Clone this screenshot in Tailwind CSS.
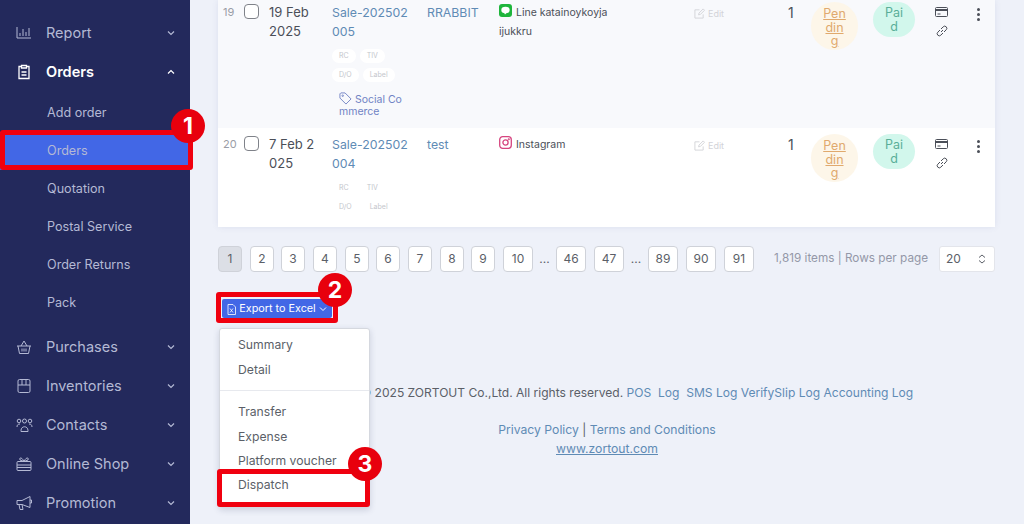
<!DOCTYPE html>
<html lang="en">
  <head>
    <meta charset="UTF-8" />
    <title>Orders</title>
    <script src="https://cdn.jsdelivr.net/npm/@tailwindcss/browser@4"></script>
  </head>
  <body class="bg-[#eef1f9] font-['Inter',sans-serif]">
    <div class="relative flex h-[524px] w-[1024px] overflow-hidden">

      <!-- Sidebar -->
      <aside class="w-[190px] shrink-0 bg-[#23295c] pt-[13px] text-[#b4b9d4]">
        <div class="flex h-[39px] items-center pl-[16px] pr-[15px] text-[14.5px]">
          <svg class="w-[16px] h-[16px]" viewBox="0 0 16 16" fill="none" stroke="currentColor" stroke-width="1"><path d="M1 2v11h14M4 11V8M7 11V4M10 11V7M13 11V3"/></svg>
          <span class="ml-[14px] flex-1">Report</span>
          <svg class="w-[8px] h-[8px]" viewBox="0 0 8 8" fill="none" stroke="currentColor" stroke-width="1.2"><path d="M1 2.5l3 3 3-3"/></svg>
        </div>
        <div class="flex h-[39px] items-center pl-[16px] pr-[15px] text-[14.5px] font-semibold text-white">
          <svg class="w-[16px] h-[16px]" viewBox="0 0 16 16" fill="none" stroke="currentColor" stroke-width="1.3"><path d="M5 2.5H3v12h10v-12h-2M5.5 1.5h5v2.500h-5zM5.500 8h5M5.500 11h5"/></svg>
          <span class="ml-[14px] flex-1">Orders</span>
          <svg class="w-[8px] h-[8px]" viewBox="0 0 8 8" fill="none" stroke="currentColor" stroke-width="1.2"><path d="M1 5.5l3-3 3 3"/></svg>
        </div>
        <div class="pt-[3px] text-[12.6px]">
          <div class="flex h-[38px] items-center pl-[47px]">Add order</div>
          <div class="flex h-[38px] items-center bg-[#4267e6] pl-[47px]">Orders</div>
          <div class="flex h-[38px] items-center pl-[47px]">Quotation</div>
          <div class="flex h-[38px] items-center pl-[47px]">Postal Service</div>
          <div class="flex h-[38px] items-center pl-[47px]">Order Returns</div>
          <div class="flex h-[38px] items-center pl-[47px]">Pack</div>
        </div>
        <div class="mt-[5px]">
          <div class="flex h-[39px] items-center pl-[16px] pr-[15px] text-[14.5px]">
            <svg class="w-[16px] h-[16px]" viewBox="0 0 16 16" fill="none" stroke="currentColor" stroke-width="1"><path d="M1 7h14M2 7l1.5 7.5h9L14 7M5 7l3-5 3 5M6 9.5v3M8 9.5v3M10 9.5v3"/></svg>
            <span class="ml-[14px] flex-1">Purchases</span>
            <svg class="w-[8px] h-[8px]" viewBox="0 0 8 8" fill="none" stroke="currentColor" stroke-width="1.2"><path d="M1 2.5l3 3 3-3"/></svg>
          </div>
          <div class="flex h-[39px] items-center pl-[16px] pr-[15px] text-[14.5px]">
            <svg class="w-[16px] h-[16px]" viewBox="0 0 16 16" fill="none" stroke="currentColor" stroke-width="1"><rect x="2" y="1.5" width="12" height="13" rx="1.5"/><path d="M2 7h12M6 7V1.5M10 7V1.5"/></svg>
            <span class="ml-[14px] flex-1">Inventories</span>
            <svg class="w-[8px] h-[8px]" viewBox="0 0 8 8" fill="none" stroke="currentColor" stroke-width="1.2"><path d="M1 2.5l3 3 3-3"/></svg>
          </div>
          <div class="flex h-[39px] items-center pl-[16px] pr-[15px] text-[14.5px]">
            <svg class="w-[17px] h-[16px]" viewBox="0 0 17 16" fill="none" stroke="currentColor" stroke-width="1"><circle cx="3" cy="4" r="1.8"/><circle cx="8.5" cy="4" r="2"/><circle cx="14" cy="4" r="1.8"/><path d="M1 10c0-2 1-3 3-3M16 10c0-2-1-3-3-3M5 13.5c0-5 7-5 7 0v1H5z"/></svg>
            <span class="ml-[13px] flex-1">Contacts</span>
            <svg class="w-[8px] h-[8px]" viewBox="0 0 8 8" fill="none" stroke="currentColor" stroke-width="1.2"><path d="M1 2.5l3 3 3-3"/></svg>
          </div>
          <div class="flex h-[39px] items-center pl-[16px] pr-[15px] text-[14.5px]">
            <svg class="w-[16px] h-[16px]" viewBox="0 0 16 16" fill="none" stroke="currentColor" stroke-width="1"><rect x="1" y="5.5" width="14" height="9" rx="1"/><path d="M1 9h14M1 11.5h14M8 5.5C6 1 3 1 4 4l4 1.5C10 1 13 1 12 4L8 5.5"/></svg>
            <span class="ml-[14px] flex-1">Online Shop</span>
            <svg class="w-[8px] h-[8px]" viewBox="0 0 8 8" fill="none" stroke="currentColor" stroke-width="1.2"><path d="M1 2.5l3 3 3-3"/></svg>
          </div>
          <div class="flex h-[39px] items-center pl-[16px] pr-[15px] text-[14.5px]">
            <svg class="w-[16px] h-[16px]" viewBox="0 0 16 16" fill="none" stroke="currentColor" stroke-width="1"><path d="M1 5.5h5L14 1.5v11L6 9.5H1zM3 9.5l1 5h3l-1-5M14 5h1.5v3H14"/></svg>
            <span class="ml-[14px] flex-1">Promotion</span>
            <svg class="w-[8px] h-[8px]" viewBox="0 0 8 8" fill="none" stroke="currentColor" stroke-width="1.2"><path d="M1 2.5l3 3 3-3"/></svg>
          </div>
        </div>
      </aside>

      <!-- Main -->
      <main class="flex-1 min-w-0">
        <div class="ml-[28px] mr-[29px] shadow-[0_0_6px_rgba(90,100,160,0.12)]">

          <!-- Row 19 -->
          <div class="grid h-[128px] grid-cols-[21px_25px_63px_95px_72px_195px_93px_24px_62px_62px_42px_18px] bg-[#f8f9fc] pl-[5px] pt-[3px] text-[13px] leading-[19px] text-[#4b4f58]">
            <div class="text-[11px] text-[#9a9da6]">19</div>
            <div class="pt-[1px]"><div class="h-[15px] w-[15px] rounded-[4px] border-[1.5px] border-[#7f8289] bg-white"></div></div>
            <div class="pr-[8px]">19 Feb 2025</div>
            <div class="text-[#5f8bb5]">
              <div class="break-all pr-[15px] text-[12.3px]">Sale-202502005</div>
              <div class="mt-[8px] flex gap-[4px] text-[7px] leading-[14px] text-[#c4c6cc]">
                <span class="rounded-full bg-white px-[7px]">RC</span><span class="rounded-full bg-white px-[7px]">TIV</span>
              </div>
              <div class="mt-[5px] flex gap-[4px] text-[7px] leading-[14px] text-[#c4c6cc]">
                <span class="rounded-full bg-white px-[7px]">D/O</span><span class="rounded-full bg-white px-[7px]">Label</span>
              </div>
              <div class="mt-[10px] w-[70px] pl-[7px] text-[10.5px] leading-[12px] break-all text-[#7083c4]">
                <svg class="inline-block h-[13px] w-[13px] align-[-2px]" viewBox="0 0 14 14" fill="none" stroke="currentColor" stroke-width="1"><path d="M1 2v4.5L7.5 13 13 7.5 6.5 1H2z"/><circle cx="4" cy="4" r="0.8"/></svg>
                Social Commerce
              </div>
            </div>
            <div class="text-[12.3px] text-[#5f8bb5]">RRABBIT</div>
            <div class="text-[10.5px] leading-[19px]">
              <svg class="mr-[1px] inline-block h-[13px] w-[13px] align-[-1px]" viewBox="0 0 13 13"><rect width="13" height="13" rx="3" fill="#1fb53c"/><ellipse cx="6.5" cy="6" rx="4.2" ry="3.3" fill="#fff"/><path d="M5 8.5l1 2 2-2z" fill="#fff"/></svg>
              Line katainoykoyja<br />ijukkru
            </div>
            <div class="flex items-center self-start pt-[1px] text-[9px] text-[#d2d3d8]">
              <svg class="mr-[3px] h-[11px] w-[11px]" viewBox="0 0 12 12" fill="none" stroke="currentColor" stroke-width="1"><path d="M10 7v4H1V2h5M5 7.5L5.5 5.5 10 1l1.5 1.5L7 7z"/></svg>Edit
            </div>
            <div class="pl-[1px] text-[14px]">1</div>
            <div class="-mt-[1px]"><div class="flex h-[48px] w-[47px] justify-center rounded-full bg-[#fdf6e9] pt-[5px] text-center text-[12.5px] leading-[13.5px] text-[#e0a96d]"><span class="w-[23px] break-all underline">Pending</span></div></div>
            <div class="-mt-[1px]"><div class="flex h-[35px] w-[42px] justify-center rounded-full bg-[#d2f7ec] pt-[4px] text-center text-[12.5px] leading-[13.5px] text-[#5aae98]"><span class="w-[21px] break-all">Paid</span></div></div>
            <div class="flex flex-col gap-[8px] pt-[4px] text-[#4b4f58]">
              <svg class="h-[10px] w-[13px]" viewBox="0 0 13 10"><rect x="0.5" y="0.5" width="12" height="9" rx="1" fill="none" stroke="currentColor"/><rect x="0.5" y="2" width="12" height="2" fill="currentColor"/><path d="M2.5 7h3" stroke="currentColor"/></svg>
              <svg class="ml-[1px] h-[12px] w-[12px]" viewBox="0 0 12 12" fill="none" stroke="currentColor" stroke-width="1"><path d="M5 7l2-2M4 5L1.8 7.2a2 2 0 003 3L7 8M8 7l2.2-2.2a2 2 0 00-3-3L5 4"/></svg>
            </div>
            <div class="pt-[5px]"><div class="flex w-[3px] flex-col gap-[2px]"><i class="h-[3px] w-[3px] rounded-full bg-[#4b4f58]"></i><i class="h-[3px] w-[3px] rounded-full bg-[#4b4f58]"></i><i class="h-[3px] w-[3px] rounded-full bg-[#4b4f58]"></i></div></div>
          </div>

          <!-- Row 20 -->
          <div class="grid h-[99px] grid-cols-[21px_25px_63px_95px_72px_195px_93px_24px_62px_62px_42px_18px] bg-white pl-[5px] pt-[7px] text-[13px] leading-[19px] text-[#4b4f58]">
            <div class="text-[11px] text-[#9a9da6]">20</div>
            <div class="pt-[1px]"><div class="h-[15px] w-[15px] rounded-[4px] border-[1.5px] border-[#7f8289] bg-white"></div></div>
            <div class="break-all pr-[15px]">7 Feb 2025</div>
            <div class="text-[#5f8bb5]">
              <div class="break-all pr-[15px] text-[12.3px]">Sale-202502004</div>
              <div class="mt-[8px] flex gap-[4px] text-[7px] leading-[14px] text-[#c4c6cc]">
                <span class="px-[7px]">RC</span><span class="px-[7px]">TIV</span>
              </div>
              <div class="mt-[5px] flex gap-[4px] text-[7px] leading-[14px] text-[#c4c6cc]">
                <span class="px-[7px]">D/O</span><span class="px-[7px]">Label</span>
              </div>
            </div>
            <div class="text-[12.3px] text-[#5f8bb5]">test</div>
            <div class="text-[10.5px] leading-[19px]">
              <svg class="mr-[1px] inline-block h-[13px] w-[13px] align-[-1px]" viewBox="0 0 13 13" fill="none" stroke="#d6457f" stroke-width="1.3"><rect x="0.7" y="0.7" width="11.6" height="11.6" rx="3"/><circle cx="6.5" cy="6.5" r="2.6"/><circle cx="9.8" cy="3.2" r="0.4"/></svg>
              Instagram
            </div>
            <div class="flex items-center self-start pt-[1px] text-[9px] text-[#d2d3d8]">
              <svg class="mr-[3px] h-[11px] w-[11px]" viewBox="0 0 12 12" fill="none" stroke="currentColor" stroke-width="1"><path d="M10 7v4H1V2h5M5 7.5L5.5 5.5 10 1l1.5 1.5L7 7z"/></svg>Edit
            </div>
            <div class="pl-[1px] text-[14px]">1</div>
            <div class="-mt-[1px]"><div class="flex h-[48px] w-[47px] justify-center rounded-full bg-[#fdf6e9] pt-[5px] text-center text-[12.5px] leading-[13.5px] text-[#e0a96d]"><span class="w-[23px] break-all underline">Pending</span></div></div>
            <div class="-mt-[1px]"><div class="flex h-[35px] w-[42px] justify-center rounded-full bg-[#d2f7ec] pt-[4px] text-center text-[12.5px] leading-[13.5px] text-[#5aae98]"><span class="w-[21px] break-all">Paid</span></div></div>
            <div class="flex flex-col gap-[8px] pt-[4px] text-[#4b4f58]">
              <svg class="h-[10px] w-[13px]" viewBox="0 0 13 10"><rect x="0.5" y="0.5" width="12" height="9" rx="1" fill="none" stroke="currentColor"/><rect x="0.5" y="2" width="12" height="2" fill="currentColor"/><path d="M2.5 7h3" stroke="currentColor"/></svg>
              <svg class="ml-[1px] h-[12px] w-[12px]" viewBox="0 0 12 12" fill="none" stroke="currentColor" stroke-width="1"><path d="M5 7l2-2M4 5L1.8 7.2a2 2 0 003 3L7 8M8 7l2.2-2.2a2 2 0 00-3-3L5 4"/></svg>
            </div>
            <div class="pt-[5px]"><div class="flex w-[3px] flex-col gap-[2px]"><i class="h-[3px] w-[3px] rounded-full bg-[#4b4f58]"></i><i class="h-[3px] w-[3px] rounded-full bg-[#4b4f58]"></i><i class="h-[3px] w-[3px] rounded-full bg-[#4b4f58]"></i></div></div>
          </div>
        </div>

        <!-- Pagination -->
        <div class="mt-[19px] flex h-[26px] items-center pl-[28px] pr-[29px] text-[12px] text-[#5b5f68]">
          <span class="flex h-[26px] w-[24px] items-center justify-center rounded-[4px] border border-[#cfd2d9] bg-[#dcdfe6]">1</span>
          <span class="ml-[8px] flex h-[26px] w-[24px] items-center justify-center rounded-[4px] border border-[#cfd2d9] bg-white">2</span>
          <span class="ml-[7px] flex h-[26px] w-[24px] items-center justify-center rounded-[4px] border border-[#cfd2d9] bg-white">3</span>
          <span class="ml-[8px] flex h-[26px] w-[24px] items-center justify-center rounded-[4px] border border-[#cfd2d9] bg-white">4</span>
          <span class="ml-[8px] flex h-[26px] w-[24px] items-center justify-center rounded-[4px] border border-[#cfd2d9] bg-white">5</span>
          <span class="ml-[7px] flex h-[26px] w-[24px] items-center justify-center rounded-[4px] border border-[#cfd2d9] bg-white">6</span>
          <span class="ml-[8px] flex h-[26px] w-[24px] items-center justify-center rounded-[4px] border border-[#cfd2d9] bg-white">7</span>
          <span class="ml-[8px] flex h-[26px] w-[24px] items-center justify-center rounded-[4px] border border-[#cfd2d9] bg-white">8</span>
          <span class="ml-[7px] flex h-[26px] w-[24px] items-center justify-center rounded-[4px] border border-[#cfd2d9] bg-white">9</span>
          <span class="ml-[8px] flex h-[26px] w-[30px] items-center justify-center rounded-[4px] border border-[#cfd2d9] bg-white">10</span>
          <span class="flex w-[23px] justify-center">...</span>
          <span class="flex h-[26px] w-[30px] items-center justify-center rounded-[4px] border border-[#cfd2d9] bg-white">46</span>
          <span class="ml-[8px] flex h-[26px] w-[30px] items-center justify-center rounded-[4px] border border-[#cfd2d9] bg-white">47</span>
          <span class="flex w-[24px] justify-center">...</span>
          <span class="flex h-[26px] w-[30px] items-center justify-center rounded-[4px] border border-[#cfd2d9] bg-white">89</span>
          <span class="ml-[8px] flex h-[26px] w-[30px] items-center justify-center rounded-[4px] border border-[#cfd2d9] bg-white">90</span>
          <span class="ml-[8px] flex h-[26px] w-[30px] items-center justify-center rounded-[4px] border border-[#cfd2d9] bg-white">91</span>
          <span class="ml-[20px] text-[11.75px] whitespace-nowrap text-[#9498a8]">1,819 items | Rows per page</span>
          <span class="ml-auto flex h-[26px] w-[56px] items-center justify-between rounded-[3px] border border-[#e3e5eb] bg-white pl-[6px] pr-[8px]">20
            <svg class="h-[10px] w-[8px]" viewBox="0 0 8 10" fill="none" stroke="currentColor" stroke-width="1"><path d="M1 3.5L4 1l3 2.5M1 6.5L4 9l3-2.5"/></svg>
          </span>
        </div>

        <!-- Export -->
        <div class="relative mt-[27px] ml-[32px] h-[19px]">
          <button class="flex h-[19px] w-[110px] items-center justify-center rounded-[2px] bg-[#4267e6] pt-[1px] text-[10.8px] text-white">
            <svg class="mr-[3px] h-[11px] w-[9px]" viewBox="0 0 9 11" fill="none" stroke="currentColor" stroke-width="0.8"><path d="M1 .5h5l2.5 2.5v7.500H1zM3 4.500l3 4M6 4.500l-3 4"/></svg>
            Export to Excel
            <svg class="ml-[3px] h-[8px] w-[8px]" viewBox="0 0 8 8" fill="none" stroke="currentColor" stroke-width="1"><path d="M1 2.500l3 3 3-3"/></svg>
          </button>
          <!-- Dropdown menu -->
          <div class="absolute left-[-3px] top-[29px] z-10 h-[180px] w-[151px] rounded-[3px] border border-[#d5d8df] bg-white pt-[3px] text-[12.2px] leading-[25px] text-[#5b5f68] shadow-[0_2px_6px_rgba(60,70,110,0.2)]">
            <div class="pl-[18px]">Summary</div>
            <div class="pl-[18px]">Detail</div>
            <div class="my-[8px] border-t border-[#e7e9ee]"></div>
            <div class="pl-[18px]">Transfer</div>
            <div class="pl-[18px]">Expense</div>
            <div class="pl-[18px] leading-[24px]">Platform voucher</div>
            <div class="pl-[18px] leading-[24px]">Dispatch</div>
          </div>
        </div>

        <!-- Footer -->
        <footer class="mt-[65px] text-center text-[12.2px] leading-[19px] text-[#5f8bb5]">
          <div class="text-[12.05px]">
            <span class="text-[#5b5f68]">Copyright © 2025 ZORTOUT Co.,Ltd. All rights reserved.</span>
            POS &nbsp;Log &nbsp;SMS Log VerifySlip Log Accounting Log
          </div>
          <div class="mt-[18px]">Privacy Policy <span class="text-[#5b5f68]">|</span> Terms and Conditions</div>
          <div><span class="underline">www.zortout.com</span></div>
        </footer>
      </main>

      <!-- Tutorial annotations -->
      <div class="absolute left-0 top-[130px] z-20 h-[40px] w-[193px] rounded-[3px] border-[5px] border-[#f0000f]"></div>
      <div class="absolute left-[171px] top-[109px] z-20 flex h-[34px] w-[34px] items-center justify-center rounded-full bg-[#e8000d] text-[23px] font-bold text-white">1</div>
      <div class="absolute left-[216px] top-[292px] z-20 h-[31px] w-[122px] rounded-[3px] border-[5px] border-[#f0000f]"></div>
      <div class="absolute left-[318px] top-[273px] z-20 flex h-[34px] w-[34px] items-center justify-center rounded-full bg-[#e8000d] text-[23px] font-bold text-white">2</div>
      <div class="absolute left-[217px] top-[469px] z-20 h-[38px] w-[153px] rounded-[3px] border-[5px] border-[#f0000f]"></div>
      <div class="absolute left-[348px] top-[447px] z-20 flex h-[34px] w-[34px] items-center justify-center rounded-full bg-[#e8000d] text-[23px] font-bold text-white">3</div>
    </div>
  </body>
</html>
